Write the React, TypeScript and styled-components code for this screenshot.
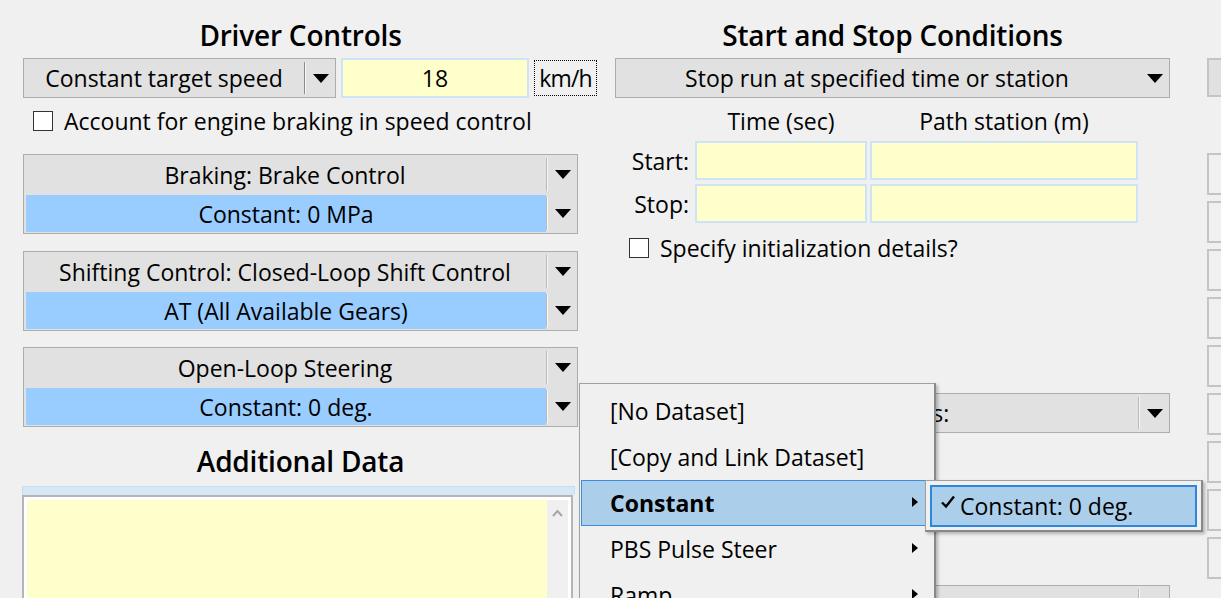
import React from "react";
import styled, { createGlobalStyle } from "styled-components";

const GlobalStyle = createGlobalStyle`
  html, body {
    margin: 0;
    padding: 0;
    background: #f0f0f0;
  }
`;

const Page = styled.div`
  position: relative;
  width: 1221px;
  height: 598px;
  overflow: hidden;
  box-sizing: border-box;
  padding-left: 23px;
  display: flex;
  align-items: flex-start;
  background: #f0f0f0;
  font-family: "Open Sans", "Noto Sans", sans-serif;
  font-size: 23px;
  line-height: 26px;
  color: #000;
`;

const Column = styled.div<{ $w: number; $ml?: number }>`
  width: ${({ $w }) => $w}px;
  margin-left: ${({ $ml }) => $ml || 0}px;
  flex: none;
  display: flex;
  flex-direction: column;
`;

const Heading = styled.div<{ $w?: number; $mt?: number; $h?: number }>`
  width: ${({ $w }) => ($w ? `${$w}px` : "100%")};
  margin-top: ${({ $mt }) => $mt ?? 12}px;
  height: ${({ $h }) => $h ?? 46}px;
  line-height: ${({ $h }) => $h ?? 46}px;
  text-align: center;
  font-size: 28px;
  font-weight: 600;
  letter-spacing: -0.2px;
  white-space: nowrap;
`;

const Row = styled.div<{ $mt?: number; $gap?: number }>`
  display: flex;
  align-items: center;
  margin-top: ${({ $mt }) => $mt || 0}px;
  gap: ${({ $gap }) => $gap || 0}px;
`;

const SelectBox = styled.div<{ $w?: number; $mt?: number }>`
  display: flex;
  box-sizing: border-box;
  height: 40px;
  width: ${({ $w }) => ($w ? `${$w}px` : "100%")};
  margin-top: ${({ $mt }) => $mt || 0}px;
  border: 1px solid #adadad;
  background: #e1e1e1;
  flex: none;
`;

const SelectLabel = styled.div<{ $blue?: boolean }>`
  flex: 1;
  display: flex;
  align-items: center;
  justify-content: center;
  white-space: nowrap;
  overflow: hidden;
  background: ${({ $blue }) => ($blue ? "#99ccff" : "transparent")};
  margin: ${({ $blue }) => ($blue ? "1px 0 1px 2px" : "0")};
`;

const ArrowCell = styled.div<{ $divider?: "dark" | "light" }>`
  position: relative;
  width: 29px;
  flex: none;
  display: flex;
  align-items: center;
  justify-content: center;
  padding-left: 2px;

  &::before {
    content: "";
    display: ${({ $divider }) => ($divider ? "block" : "none")};
    position: absolute;
    left: 0;
    top: 3px;
    bottom: 3px;
    width: 1px;
    background: ${({ $divider }) => ($divider === "dark" ? "#8a8a8a" : "#b9b9b9")};
    box-shadow: 1px 0 0 #f7f7f7;
  }
`;

const Triangle = styled.span`
  width: 0;
  height: 0;
  border-left: 8px solid transparent;
  border-right: 8px solid transparent;
  border-top: 9px solid #000;
`;

const Arrow = ({ divider }: { divider?: "dark" | "light" }) => (
  <ArrowCell $divider={divider}>
    <Triangle />
  </ArrowCell>
);

const TextField = styled.div<{ $w?: number; $h?: number }>`
  box-sizing: border-box;
  width: ${({ $w }) => ($w ? `${$w}px` : "100%")};
  height: ${({ $h }) => $h ?? 39}px;
  background: #ffffcc;
  border: 2px solid #cfe3f6;
  display: flex;
  align-items: center;
  justify-content: center;
  flex: none;
`;

const UnitLabel = styled.div`
  box-sizing: border-box;
  height: 36px;
  width: 64px;
  border: 1px dotted #000;
  display: flex;
  align-items: center;
  justify-content: center;
  letter-spacing: -0.8px;
  white-space: nowrap;
`;

const CheckRow = styled.label<{ $mt?: number; $ml?: number }>`
  display: flex;
  align-items: center;
  gap: 11px;
  height: 24px;
  margin-top: ${({ $mt }) => $mt || 0}px;
  margin-left: ${({ $ml }) => $ml || 0}px;
  white-space: nowrap;
`;

const CheckBox = styled.span`
  box-sizing: border-box;
  width: 20px;
  height: 20px;
  border: 1px solid #333;
  background: #fff;
  flex: none;
`;

const Group = styled.div<{ $mt: number }>`
  box-sizing: border-box;
  width: 555px;
  height: 80px;
  margin-top: ${({ $mt }) => $mt}px;
  border: 1px solid #adadad;
  background: #e1e1e1;
  display: flex;
  flex-direction: column;
`;

const GroupRow = styled.div`
  display: flex;
  height: 39px;
`;

const FocusBand = styled.div`
  box-sizing: border-box;
  width: 553px;
  height: 9px;
  margin-top: 3px;
  margin-left: -1px;
  background: #d7e7f5;
  border: 1px solid #c6ddf2;
  border-bottom: none;
`;

const TextArea = styled.div`
  box-sizing: border-box;
  width: 551px;
  height: 120px;
  margin-left: -1px;
  border: 2px solid #b5b5b5;
  background: #fff;
  padding: 3px 3px 0 3px;
  display: flex;
`;

const TextAreaBody = styled.div`
  flex: 1;
  background: #ffffcc;
`;

const ScrollTrack = styled.div`
  width: 21px;
  background: #f0f0f0;
  display: flex;
  justify-content: center;
  padding-top: 9px;
  align-items: flex-start;
`;

const FieldGrid = styled.div<{ $mt?: number }>`
  display: grid;
  grid-template-columns: 77px 172px 268px;
  column-gap: 3px;
  row-gap: 4px;
  margin-top: ${({ $mt }) => $mt || 0}px;
`;

const GridLabel = styled.div<{ $align?: "right" | "center" }>`
  display: flex;
  align-items: center;
  justify-content: ${({ $align }) => ($align === "right" ? "flex-end" : "center")};
  padding-right: ${({ $align }) => ($align === "right" ? "3px" : "0")};
  white-space: nowrap;
`;

const SideBox = styled.div<{ $mt: number; $filled?: boolean; $h?: number }>`
  box-sizing: border-box;
  width: 60px;
  height: ${({ $h }) => $h ?? 42}px;
  margin-top: ${({ $mt }) => $mt}px;
  border: 2px solid #c4c4c4;
  background: ${({ $filled }) => ($filled ? "#e1e1e1" : "#f0f0f0")};
`;

const Menu = styled.div`
  position: absolute;
  left: 579px;
  top: 383px;
  width: 357px;
  height: 240px;
  box-sizing: border-box;
  padding: 4px 2px 0 1px;
  background: #f0f0f0;
  border: 1px solid #a0a0a0;
  border-right: 2px solid #888;
  box-shadow: 2px 2px 3px rgba(0, 0, 0, 0.25);
  z-index: 5;
`;

const MenuItem = styled.div<{ $active?: boolean }>`
  position: relative;
  box-sizing: border-box;
  height: 46px;
  display: flex;
  align-items: center;
  padding-left: 28px;
  white-space: nowrap;
  font-weight: ${({ $active }) => ($active ? 700 : 400)};
  background: ${({ $active }) => ($active ? "#abcfea" : "transparent")};
  border: 1px solid ${({ $active }) => ($active ? "#3c8ddb" : "transparent")};
`;

const SubArrow = styled.span`
  position: absolute;
  right: 13px;
  top: 50%;
  margin-top: -6px;
  width: 0;
  height: 0;
  border-top: 5px solid transparent;
  border-bottom: 5px solid transparent;
  border-left: 6px solid #000;
`;

const SubMenu = styled.div`
  position: absolute;
  left: 925px;
  top: 480px;
  width: 278px;
  height: 52px;
  box-sizing: border-box;
  padding: 4px;
  background: #f0f0f0;
  border: 1px solid #a0a0a0;
  border-right: 2px solid #888;
  border-bottom: 2px solid #888;
  box-shadow: 2px 2px 3px rgba(0, 0, 0, 0.25);
  z-index: 6;
`;

const SubItem = styled.div`
  box-sizing: border-box;
  height: 42px;
  display: flex;
  align-items: center;
  gap: 4px;
  padding-left: 8px;
  background: #abcfea;
  border: 2px solid #2b86dc;
  white-space: nowrap;
`;

const Check = () => (
  <svg width="16" height="16" viewBox="0 0 16 16" style={{ marginTop: -8 }}>
    <path d="M2 8.5 L6 12.5 L14 2.5" fill="none" stroke="#000" strokeWidth="2.4" />
  </svg>
);

const Chevron = () => (
  <svg width="11" height="8" viewBox="0 0 11 8">
    <path d="M1 7 L5.5 2 L10 7" fill="none" stroke="#a6a6a6" strokeWidth="2" />
  </svg>
);

const menuItems = [
  { label: "[No Dataset]", sub: false },
  { label: "[Copy and Link Dataset]", sub: false },
  { label: "Constant", sub: true, active: true },
  { label: "PBS Pulse Steer", sub: true },
  { label: "Ramp", sub: true },
];

const groups = [
  { top: "Braking: Brake Control", bottom: "Constant: 0 MPa", mt: 21 },
  { top: "Shifting Control: Closed-Loop Shift Control", bottom: "AT (All Available Gears)", mt: 17 },
  { top: "Open-Loop Steering", bottom: "Constant: 0 deg.", mt: 16 },
];

const sideBoxes = [56, 6, 6, 6, 6, 6, 6, 6, 6];

export default function App() {
  return (
    <>
      <GlobalStyle />
      <Page>
        <Column $w={574}>
          <Heading $w={555}>Driver Controls</Heading>
          <Row $gap={5}>
            <SelectBox $w={313}>
              <SelectLabel>Constant target speed</SelectLabel>
              <Arrow divider="dark" />
            </SelectBox>
            <TextField $w={188} $h={40}>18</TextField>
            <UnitLabel>km/h</UnitLabel>
          </Row>
          <CheckRow $mt={11} $ml={10}>
            <CheckBox />
            Account for engine braking in speed control
          </CheckRow>
          {groups.map((g) => (
            <Group key={g.top} $mt={g.mt}>
              <GroupRow>
                <SelectLabel>{g.top}</SelectLabel>
                <Arrow divider="light" />
              </GroupRow>
              <GroupRow>
                <SelectLabel $blue>{g.bottom}</SelectLabel>
                <Arrow divider="light" />
              </GroupRow>
            </Group>
          ))}
          <Heading $w={555} $mt={12} $h={44}>
            Additional Data
          </Heading>
          <FocusBand />
          <TextArea>
            <TextAreaBody />
            <ScrollTrack>
              <Chevron />
            </ScrollTrack>
          </TextArea>
        </Column>

        <Column $w={555} $ml={18}>
          <Heading>Start and Stop Conditions</Heading>
          <SelectBox>
            <SelectLabel>Stop run at specified time or station</SelectLabel>
            <Arrow />
          </SelectBox>
          <FieldGrid $mt={10}>
            <span />
            <GridLabel>Time (sec)</GridLabel>
            <GridLabel>Path station (m)</GridLabel>
          </FieldGrid>
          <FieldGrid $mt={7}>
            <GridLabel $align="right">Start:</GridLabel>
            <TextField />
            <TextField />
            <GridLabel $align="right">Stop:</GridLabel>
            <TextField />
            <TextField />
          </FieldGrid>
          <CheckRow $mt={13} $ml={14}>
            <CheckBox />
            Specify initialization details?
          </CheckRow>
          <SelectBox $mt={133}>
            <SelectLabel>Path settings:</SelectLabel>
            <Arrow divider="light" />
          </SelectBox>
          <SelectBox $mt={152}>
            <SelectLabel />
            <Arrow divider="light" />
          </SelectBox>
        </Column>

        <Column $w={60} $ml={37}>
          <SideBox $mt={58} $h={39} $filled />
          {sideBoxes.map((mt, i) => (
            <SideBox key={i} $mt={mt} />
          ))}
        </Column>

        <Menu>
          {menuItems.map((m) => (
            <MenuItem key={m.label} $active={m.active}>
              {m.label}
              {m.sub && <SubArrow />}
            </MenuItem>
          ))}
        </Menu>
        <SubMenu>
          <SubItem>
            <Check />
            Constant: 0 deg.
          </SubItem>
        </SubMenu>
      </Page>
    </>
  );
}
